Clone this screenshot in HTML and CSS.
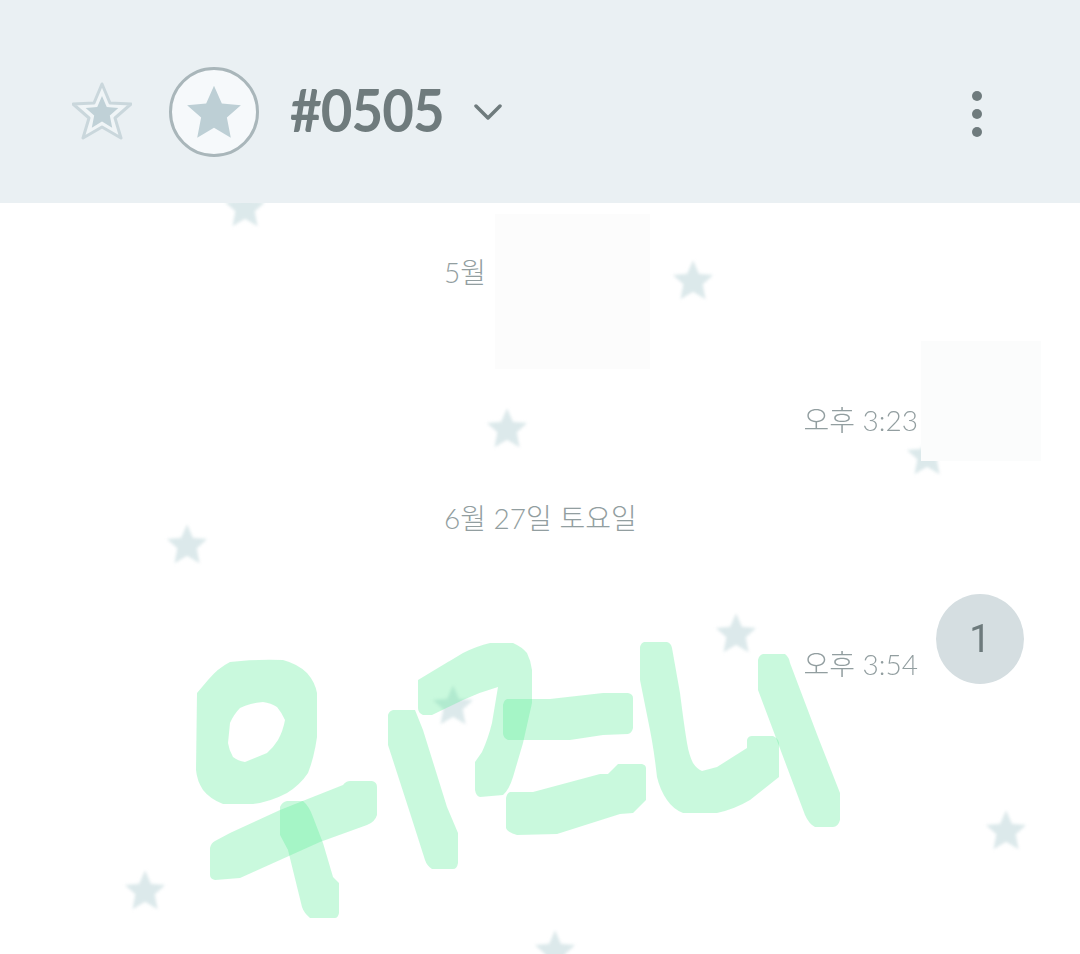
FILE: index.html
```html
<!DOCTYPE html>
<html lang="ko">
<head>
    <meta charset="UTF-8">
    <meta name="viewport" content="width=device-width, initial-scale=1.0">
    <title>#0505</title>
    <link rel="stylesheet" href="styles.css">
</head>
<body>
    <svg class="defs" width="0" height="0">
        <symbol id="star" viewBox="0 0 100 100">
            <polygon points="50,3 64,35 98,38 73,60 80,96 50,78 20,96 27,60 2,38 36,35"/>
        </symbol>
    </svg>

    <header class="top-bar">
        <svg class="fav-icon" viewBox="0 0 60 60">
            <polygon class="fav-outline" points="30,2 38,21 59,22 43,36 49,56 30,45 11,56 17,36 1,22 22,21"/>
            <use href="#star" class="fav-fill" x="13" y="13" width="34" height="34"/>
        </svg>
        <div class="avatar">
            <svg class="avatar-star" viewBox="0 0 100 100"><use href="#star"/></svg>
        </div>
        <h1 class="room-name">#0505</h1>
        <svg class="chevron" viewBox="0 0 28 16">
            <path d="M2 2 L14 14 L26 2"/>
        </svg>
        <div class="kebab">
            <span></span>
            <span></span>
            <span></span>
        </div>
    </header>

    <main class="chat">
        <!-- wallpaper stars and the hand drawn scribble, in page coordinates -->
        <svg class="canvas" viewBox="0 203 1080 751">
            <g class="stars">
                <use href="#star" x="224" y="186" width="42" height="42"/>
                <use href="#star" x="672" y="259" width="42" height="42"/>
                <use href="#star" x="486" y="407" width="42" height="42"/>
                <use href="#star" x="166" y="523" width="42" height="42"/>
                <use href="#star" x="906" y="434" width="42" height="42"/>
                <use href="#star" x="715" y="612" width="42" height="42"/>
                <use href="#star" x="432" y="684" width="42" height="42"/>
                <use href="#star" x="985" y="809" width="42" height="42"/>
                <use href="#star" x="124" y="869" width="42" height="42"/>
                <use href="#star" x="534" y="929" width="42" height="42"/>
            </g>
            <g class="scribble">
                <path fill-rule="evenodd" d="M197 693 L208 680 Q218 668 230 662 Q255 659 283 660 Q298 664 307 673 Q315 682 317 693 L317 737 Q314 758 308 773 Q300 785 287 793 Q270 802 253 804 L223 804 Q210 799 203 790 Q197 781 196 770 Z M230 723 Q234 714 240 708 Q250 703 263 702 Q271 703 277 707 Q282 713 285 720 Q283 731 278 740 Q273 748 267 753 L245 762 Q238 761 233 757 Q229 750 228 743 Z"/>
                <path d="M210 848 Q211 843 215 841 L230 833 L280 810 L343 785 Q346 781 350 781 L372 781 Q377 782 377 787 L377 815 Q375 822 367 825 L320 842 L240 878 L215 880 Q210 879 210 875 Z"/>
                <path d="M280 807 Q282 802 287 801 L303 801 Q309 806 313 817 L323 843 L333 877 L339 883 L339 913 Q338 918 335 918 L310 918 Q304 913 302 907 L288 850 L280 835 Z"/>
                <path d="M388 715 Q389 711 393 710 L415 710 L423 730 L447 807 L458 833 L458 863 Q457 869 453 869 L432 869 Q427 866 425 860 L410 813 L388 745 Z"/>
                <path d="M418 680 L463 653 Q477 646 490 643 L513 643 Q522 647 527 653 Q531 661 532 670 L532 703 L523 743 L513 777 Q509 790 503 795 L480 797 Q476 796 475 790 L475 762 L482 752 Q488 739 492 723 L498 687 Q480 692 463 700 L432 715 L423 715 Q418 713 418 708 Z"/>
                <path d="M503 705 Q504 700 507 699 L550 699 L603 693 L628 693 Q633 694 633 698 L633 728 Q632 733 628 734 L603 735 L570 740 L508 740 Q503 738 503 733 Z"/>
                <path d="M506 798 Q507 793 510 792 L533 792 L600 774 L608 774 Q612 770 618 764 L642 764 Q646 765 646 768 L646 800 L633 813 L620 814 L557 834 L517 835 Q507 832 506 828 Z"/>
                <path d="M640 647 Q641 643 644 642 L667 642 Q671 643 672 648 L680 693 Q684 725 687 743 Q689 755 693 763 Q697 769 702 771 L717 767 L747 748 L747 740 Q748 736 752 736 L773 736 Q778 738 779 743 L779 777 L750 800 Q735 809 717 813 L683 813 Q673 809 667 800 Q660 790 657 777 Q654 750 650 730 L640 680 Z"/>
                <path d="M758 660 Q759 655 763 654 L785 654 Q789 657 790 663 L818 737 L840 793 L840 820 Q838 827 833 827 L815 827 Q809 824 805 815 L758 690 Z"/>
            </g>
        </svg>

        <div class="date-row"><span class="date">5월</span></div>
        <div class="msg-row msg-row-plain"><span class="time">오후 3:23</span></div>
        <div class="date-row"><span class="date">6월 27일 토요일</span></div>
        <div class="msg-row">
            <span class="time">오후 3:54</span>
            <div class="unread">1</div>
        </div>

        <div class="patch patch-date"></div>
        <div class="patch patch-msg"></div>
    </main>
</body>
</html>
```

FILE: styles.css
```css
html, body {
    height: 100%;
}
body {
    font-family: "Lato", "Noto Sans CJK KR", sans-serif;
    margin: 0;
    padding: 0;
    background-color: #fff;
    display: flex;
    flex-direction: column;
    height: 100vh;
    overflow: hidden;
}
.defs {
    position: absolute;
}
.top-bar {
    flex: 0 0 203px;
    box-sizing: border-box;
    display: flex;
    align-items: center;
    padding: 21px 98px 0 72px;
    background-color: #eaf0f3;
}
.fav-icon {
    width: 60px;
    height: 60px;
    margin-right: 37px;
    filter: blur(0.5px);
}
.fav-outline {
    fill: #f0f5f7;
    stroke: #cad7dc;
    stroke-width: 3;
    stroke-linejoin: round;
}
.fav-fill {
    fill: #c0d1d7;
}
.avatar {
    width: 90px;
    height: 90px;
    box-sizing: border-box;
    border: 3px solid #a9b6ba;
    border-radius: 50%;
    background-color: #f6f9fb;
    display: flex;
    align-items: center;
    justify-content: center;
    margin-right: 31px;
}
.avatar-star {
    width: 56px;
    height: 56px;
    fill: #bdcfd5;
    filter: blur(0.5px);
}
.room-name {
    font-size: 60px;
    font-weight: 700;
    letter-spacing: -1px;
    line-height: 1;
    color: #6f7b7d;
    margin: 0 32px 6px 0;
    width: 152px;
    white-space: nowrap;
    transform: scaleX(0.91);
    transform-origin: left center;
}
.chevron {
    width: 28px;
    height: 16px;
    fill: none;
    stroke: #6f7b7d;
    stroke-width: 3.5;
    stroke-linecap: round;
    stroke-linejoin: round;
}
.kebab {
    margin-left: auto;
    margin-top: 4px;
    display: flex;
    flex-direction: column;
    gap: 8px;
}
.kebab span {
    width: 10px;
    height: 10px;
    border-radius: 50%;
    background-color: #6f7b7d;
}
.chat {
    flex: 1;
    position: relative;
    overflow: hidden;
    padding-top: 49px;
}
.canvas {
    position: absolute;
    top: 0;
    left: 0;
    width: 1080px;
    height: 751px;
}
.stars {
    fill: #dce9eb;
    filter: blur(1.5px);
}
.scribble {
    filter: blur(0.4px);
}
.scribble path {
    fill: #5cec98;
    fill-opacity: 0.33;
}
.date-row {
    position: relative;
    width: 192px;
    margin: 0 auto;
}
.date, .time {
    font-size: 28px;
    font-weight: 300;
    line-height: 40px;
    color: #929ea0;
    white-space: nowrap;
}
.date {
    display: block;
}
.msg-row {
    position: relative;
    display: flex;
    justify-content: flex-end;
    align-items: flex-end;
    gap: 18px;
    padding-right: 56px;
    margin: 56px 0;
}
.msg-row-plain {
    padding-right: 162px;
    margin: 108px 0 58px;
}
.unread {
    width: 88px;
    height: 90px;
    border-radius: 50%;
    background-color: #d5dee1;
    color: #6d7a7c;
    font-family: "Roboto", sans-serif;
    font-size: 38px;
    display: flex;
    align-items: center;
    justify-content: center;
}
.patch {
    position: absolute;
}
.patch-date {
    left: 495px;
    top: 11px;
    width: 155px;
    height: 155px;
    background-color: #fcfcfc;
}
.patch-msg {
    left: 921px;
    top: 138px;
    width: 120px;
    height: 120px;
    background-color: #fbfcfc;
}
```
